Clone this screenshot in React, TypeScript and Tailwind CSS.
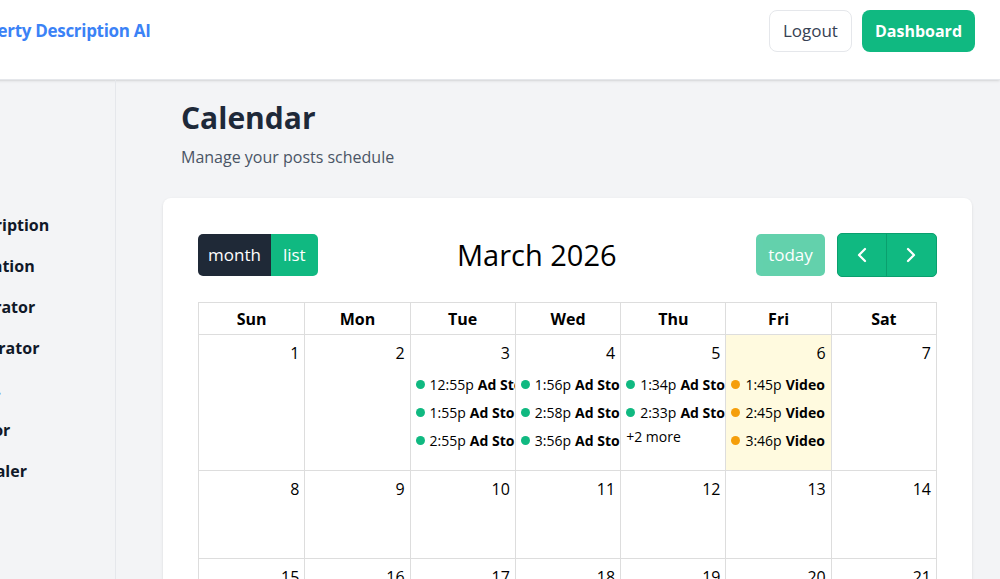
import { ChevronLeft, ChevronRight } from "lucide-react";

type Ev = { time: string; title: string; color: "green" | "orange" };

const days = ["Sun", "Mon", "Tue", "Wed", "Thu", "Fri", "Sat"];

const sideItems = [
  "Property Description",
  "Property Valuation",
  "Hashtag Generator",
  "Captions Generator",
  "Mortgage Calc.",
  "Value Estimator",
  "Property Upscaler",
];

const events: Record<number, { list: Ev[]; more?: number }> = {
  3: {
    list: [
      { time: "12:55p", title: "Ad Story", color: "green" },
      { time: "1:55p", title: "Ad Story", color: "green" },
      { time: "2:55p", title: "Ad Story", color: "green" },
    ],
  },
  4: {
    list: [
      { time: "1:56p", title: "Ad Story", color: "green" },
      { time: "2:58p", title: "Ad Story", color: "green" },
      { time: "3:56p", title: "Ad Story", color: "green" },
    ],
  },
  5: {
    list: [
      { time: "1:34p", title: "Ad Story", color: "green" },
      { time: "2:33p", title: "Ad Story", color: "green" },
    ],
    more: 2,
  },
  6: {
    list: [
      { time: "1:45p", title: "Video", color: "orange" },
      { time: "2:45p", title: "Video", color: "orange" },
      { time: "3:46p", title: "Video", color: "orange" },
    ],
  },
};

const weeks = [
  { nums: [1, 2, 3, 4, 5, 6, 7], h: "h-[136px]" },
  { nums: [8, 9, 10, 11, 12, 13, 14], h: "h-[88px]" },
  { nums: [15, 16, 17, 18, 19, 20, 21], h: "h-[88px]" },
];

function DayCell({ n }: { n: number }) {
  const data = events[n];
  const today = n === 6;
  return (
    <div
      className={
        "border-l border-[#ddd] first:border-l-0 min-w-0 " +
        (today ? "bg-[#fffadf]" : "bg-white")
      }
    >
      <div className="flex justify-end px-[5px] pt-[6px] h-[36px] text-[16px] text-black">
        {n}
      </div>
      {data ? (
        <div className="flex flex-col gap-[6px] pt-[2px]">
          {data.list.map((e, i) => (
            <div
              key={i}
              className="flex items-center h-[22px] pl-[5px] pr-[2px] overflow-hidden whitespace-nowrap text-[14px] text-black"
            >
              <span
                className={
                  "mr-[5px] inline-block h-[9px] w-[9px] shrink-0 rounded-full " +
                  (e.color === "green" ? "bg-[#10b981]" : "bg-[#f59e0b]")
                }
              />
              <span>{e.time}</span>
              <span className="ml-[4px] font-bold">{e.title}</span>
            </div>
          ))}
          {data.more ? (
            <div className="h-[20px] pl-[5px] text-[14px] text-black leading-[16px]">
              +{data.more} more
            </div>
          ) : null}
        </div>
      ) : null}
    </div>
  );
}

export default function App() {
  return (
    <div className="w-[1000px] h-[579px] overflow-hidden bg-[#f3f4f6] font-['Open_Sans','Noto_Sans',sans-serif]">
      <div className="w-[1141px] -ml-[141px] h-full flex flex-col">
        <header className="h-[80px] shrink-0 bg-white border-b border-gray-200 shadow-sm flex items-start justify-between pt-[10px] pl-[100px] pr-[25px]">
          <div className="h-[42px] flex items-center text-[17px] tracking-[-0.3px] font-bold text-[#3b82f6]">
            Property Description AI
          </div>
          <div className="flex items-center gap-[10px]">
            <button className="h-[42px] px-[13px] rounded-lg border border-gray-200 bg-white text-[17px] text-gray-700">
              Logout
            </button>
            <button className="h-[42px] px-[13px] rounded-lg bg-[#10b981] text-[16px] font-bold text-white">
              Dashboard
            </button>
          </div>
        </header>

        <div className="flex flex-1 min-h-0">
          <aside className="w-[257px] shrink-0 border-r border-gray-200 pt-[124px] pl-[24px]">
            <ul className="flex flex-col">
              {sideItems.map((s) => (
                <li
                  key={s}
                  className="h-[41px] flex items-center text-[16px] font-bold text-gray-900 whitespace-nowrap"
                >
                  {s}
                </li>
              ))}
            </ul>
          </aside>

          <main className="flex-1 min-w-0 pl-[47px] pr-[28px] pt-[20px]">
            <div className="px-[18px]">
              <h1 className="text-[30px] leading-[36px] font-bold text-gray-800">
                Calendar
              </h1>
              <p className="mt-[9px] text-[16px] text-gray-600">
                Manage your posts schedule
              </p>
            </div>

            <div className="mt-[29px] rounded-lg bg-white shadow-sm p-[35px]">
              <div className="flex items-center justify-between h-[44px]">
                <div className="flex h-[42px] rounded-[5px] overflow-hidden text-[17px] text-white">
                  <button className="bg-[#1f2937] px-[10px]">month</button>
                  <button className="bg-[#10b981] px-[12px]">list</button>
                </div>
                <h2 className="text-[29px] text-black">March 2026</h2>
                <div className="flex items-center gap-[12px]">
                  <button className="h-[42px] w-[69px] rounded-[5px] bg-[#10b981] opacity-65 text-[17px] text-white">
                    today
                  </button>
                  <div className="flex h-[44px] rounded-[5px] overflow-hidden border border-[#0a9f6e] bg-[#10b981]">
                    <button className="w-[49px] flex items-center justify-center border-r border-[#0a9f6e] text-white">
                      <ChevronLeft size={24} strokeWidth={2.25} />
                    </button>
                    <button className="w-[49px] flex items-center justify-center text-white">
                      <ChevronRight size={24} strokeWidth={2.25} />
                    </button>
                  </div>
                </div>
              </div>

              <div className="mt-[25px] border border-[#ddd]">
                <div className="grid grid-cols-7 h-[32px] border-b border-[#ddd]">
                  {days.map((d) => (
                    <div
                      key={d}
                      className="border-l border-[#ddd] first:border-l-0 flex items-center justify-center text-[16px] font-bold text-black"
                    >
                      {d}
                    </div>
                  ))}
                </div>
                {weeks.map((w, i) => (
                  <div
                    key={i}
                    className={"grid grid-cols-7 border-b border-[#ddd] " + w.h}
                  >
                    {w.nums.map((n) => (
                      <DayCell key={n} n={n} />
                    ))}
                  </div>
                ))}
              </div>
            </div>
          </main>
        </div>
      </div>
    </div>
  );
}
